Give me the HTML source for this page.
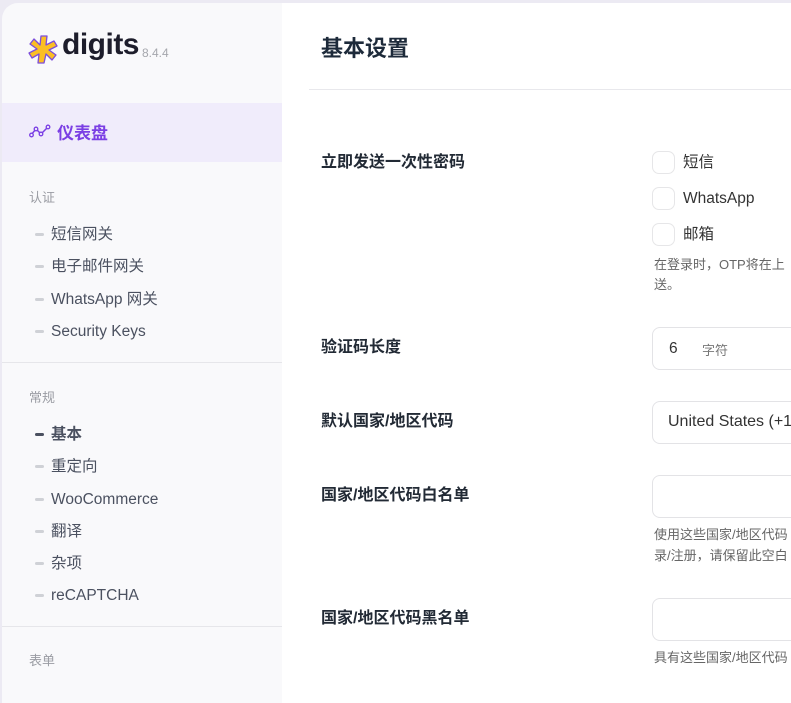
<!DOCTYPE html>
<html><head><meta charset="utf-8"><style>
*{margin:0;padding:0;box-sizing:border-box}
body{width:791px;height:662px;overflow:hidden;background:#eceaf3;font-family:"Liberation Sans","Noto Sans CJK SC",sans-serif;position:relative}
.a{position:absolute;white-space:nowrap}
#side{position:absolute;left:2px;top:3px;width:280px;height:700px;background:#f9f9fb;border-top-left-radius:16px}
#main{position:absolute;left:282px;top:3px;width:520px;height:700px;background:#fff}
.sec{font-size:13px;color:#9a9ca3;left:29px}
.it{font-size:15.5px;color:#4b5160;left:51px;line-height:20px}
.d{position:absolute;left:35px;width:9px;height:3px;border-radius:2px;background:#cfd1d6}
.lb{font-size:16px;font-weight:bold;color:#222a35;left:321px;line-height:20px}
.cb{position:absolute;left:652px;width:23px;height:23px;border:1px solid #e6e6e8;border-radius:7px;background:#fff}
.cl{font-size:15.5px;color:#333;left:683px;line-height:20px}
.box{position:absolute;left:652px;width:160px;height:43px;border:1px solid #e3e3e6;border-radius:8px;background:#fff}
.h{font-size:13px;color:#666;left:654px;line-height:20px}
.hr{position:absolute;left:2px;width:280px;height:1px;background:#e6e6ea}
</style></head><body>
<div id="side"></div>
<div id="main"></div>
<svg class="a" style="left:28px;top:33px" width="32" height="32" viewBox="0 0 32 32">
<path d="M13 3h6l-1 9 8-4 3 5-8 4 7 5-4 5-6-6-2 9h-6l1-9-7 4-3-5 8-4-7-5 4-5 6 6z" fill="#fbbf24" stroke="#7c4ddb" stroke-width="1.3" stroke-linejoin="round"/>
</svg>
<div class="a" style="left:62px;top:28px;font-size:30px;font-weight:bold;color:#1d1d2b;letter-spacing:-0.5px">digits</div>
<div class="a" style="left:142px;top:46px;font-size:12px;color:#a5a7ad">8.4.4</div>
<div class="a" style="left:2px;top:103px;width:280px;height:59px;background:#f0ecfb"></div>
<svg class="a" style="left:29px;top:124px" width="22" height="14" viewBox="0 0 22 14"><path d="M2 11L7 5l5 5 7-7" fill="none" stroke="#7b3fe4" stroke-width="1.5"/><circle cx="2.5" cy="11" r="1.8" fill="#f0ecfb" stroke="#7b3fe4" stroke-width="1.3"/><circle cx="7" cy="5" r="1.8" fill="#f0ecfb" stroke="#7b3fe4" stroke-width="1.3"/><circle cx="12" cy="10" r="1.8" fill="#f0ecfb" stroke="#7b3fe4" stroke-width="1.3"/><circle cx="19" cy="3" r="1.8" fill="#f0ecfb" stroke="#7b3fe4" stroke-width="1.3"/></svg>
<div class="a" style="left:57px;top:119px;font-size:17px;color:#7b3fe4;font-weight:bold">仪表盘</div>
<div class="a sec" style="top:187px">认证</div>
<div class="d" style="top:233px"></div><div class="a it" style="top:225px">短信网关</div>
<div class="d" style="top:265px"></div><div class="a it" style="top:257px">电子邮件网关</div>
<div class="d" style="top:298px"></div><div class="a it" style="top:290px">WhatsApp 网关</div>
<div class="d" style="top:330px"></div><div class="a it" style="top:322px">Security Keys</div>
<div class="hr" style="top:362px"></div>
<div class="a sec" style="top:387px">常规</div>
<div class="d" style="top:433px;background:#4b5160"></div><div class="a it" style="top:425px;font-weight:bold">基本</div>
<div class="d" style="top:465px"></div><div class="a it" style="top:457px">重定向</div>
<div class="d" style="top:498px"></div><div class="a it" style="top:490px">WooCommerce</div>
<div class="d" style="top:530px"></div><div class="a it" style="top:522px">翻译</div>
<div class="d" style="top:562px"></div><div class="a it" style="top:554px">杂项</div>
<div class="d" style="top:594px"></div><div class="a it" style="top:586px">reCAPTCHA</div>
<div class="hr" style="top:626px"></div>
<div class="a sec" style="top:650px">表单</div>

<div class="a" style="left:321px;top:31px;font-size:22px;font-weight:bold;color:#1d2a3a">基本设置</div>
<div class="a" style="left:309px;top:89px;width:490px;height:1px;background:#e8e8ec"></div>
<div class="a lb" style="top:153px">立即发送一次性密码</div>
<div class="cb" style="top:151px"></div><div class="a cl" style="top:153px">短信</div>
<div class="cb" style="top:187px"></div><div class="a cl" style="top:189px">WhatsApp</div>
<div class="cb" style="top:223px"></div><div class="a cl" style="top:225px">邮箱</div>
<div class="a h" style="top:255px">在登录时，OTP将在上</div>
<div class="a h" style="top:275px">送。</div>
<div class="a lb" style="top:338px">验证码长度</div>
<div class="box" style="top:327px"></div>
<div class="a" style="left:669px;top:340px;font-size:15.5px;color:#333">6</div>
<div class="a" style="left:702px;top:340px;font-size:13px;color:#777">字符</div>
<div class="a lb" style="top:412px">默认国家/地区代码</div>
<div class="box" style="top:401px"></div>
<div class="a" style="left:668px;top:413px;font-size:16px;color:#333">United States (+1</div>
<div class="a lb" style="top:486px">国家/地区代码白名单</div>
<div class="box" style="top:475px"></div>
<div class="a h" style="top:525px">使用这些国家/地区代码</div>
<div class="a h" style="top:546px">录/注册，请保留此空白</div>
<div class="a lb" style="top:609px">国家/地区代码黑名单</div>
<div class="box" style="top:598px"></div>
<div class="a h" style="top:648px">具有这些国家/地区代码</div>
</body></html>
